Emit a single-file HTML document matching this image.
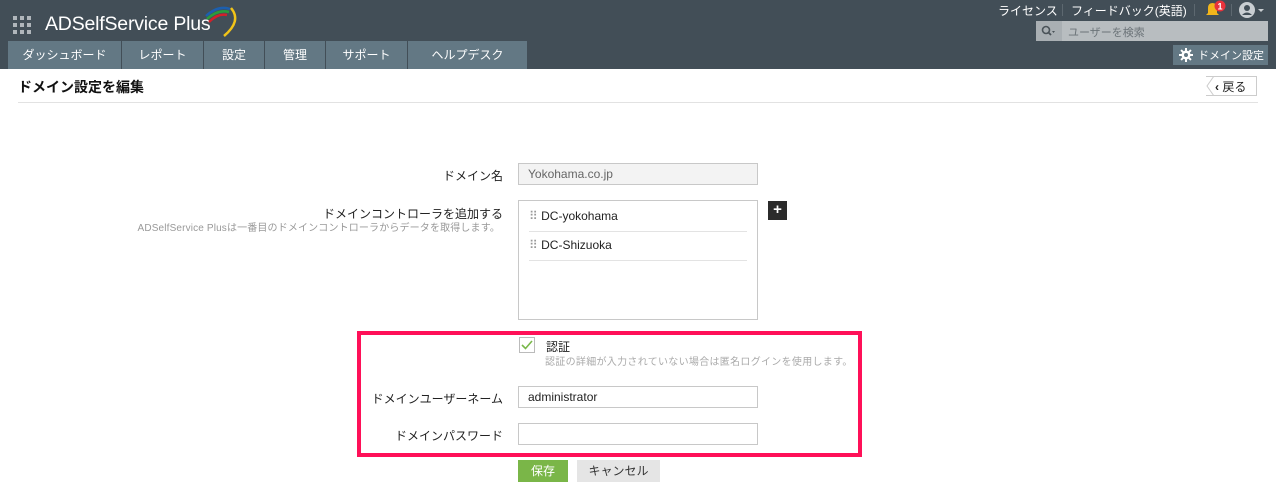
<!DOCTYPE html>
<html><head><meta charset="utf-8"><style>
*{margin:0;padding:0;box-sizing:border-box}
body{width:1276px;height:501px;background:#fff;font-family:"Liberation Sans","Noto Sans CJK JP",sans-serif;font-size:12px;color:#222;position:relative;overflow:hidden}
.abs{position:absolute}
#hdr{left:0;top:0;width:1276px;height:69px;background:#424e57}
.tab{position:absolute;top:41px;height:28px;background:#637884;color:#fff;font-size:12px;text-align:center;line-height:28px}
.lbl{position:absolute;text-align:right;font-size:12px;color:#222}
.inp{position:absolute;border:1px solid #c8c8c8;height:22px;font-size:12px;line-height:20px;padding-left:9px;background:#fff}
</style></head><body>
<div id="hdr" class="abs">
 <svg class="abs" style="left:13px;top:16px" width="18" height="18"><g fill="#b0b6bb">
 <rect x="0" y="0" width="4" height="4"/><rect x="7" y="0" width="4" height="4"/><rect x="14" y="0" width="4" height="4"/>
 <rect x="0" y="7" width="4" height="4"/><rect x="7" y="7" width="4" height="4"/><rect x="14" y="7" width="4" height="4"/>
 <rect x="0" y="14" width="4" height="4"/><rect x="7" y="14" width="4" height="4"/><rect x="14" y="14" width="4" height="4"/></g></svg>
 <div class="abs" style="left:45px;top:13px;color:#fff;font-size:19.5px;letter-spacing:-0.2px">ADSelfService Plus</div>
 <svg class="abs" style="left:200px;top:3px" width="42" height="36">
  <path d="M6 13 Q18 2 30 6" stroke="#1c5fae" stroke-width="2.5" fill="none"/>
  <path d="M7 16 Q18 6 29 9" stroke="#2a9b3d" stroke-width="2.5" fill="none"/>
  <path d="M9 19 Q18 10 27 12" stroke="#d3202a" stroke-width="2.5" fill="none"/>
  <path d="M31 5 Q42 18 24 33" stroke="#f2c418" stroke-width="2.5" fill="none"/>
 </svg>
 <div class="tab" style="left:8px;width:113px">ダッシュボード</div>
 <div class="tab" style="left:122px;width:81px">レポート</div>
 <div class="tab" style="left:204px;width:60px">設定</div>
 <div class="tab" style="left:265px;width:60px">管理</div>
 <div class="tab" style="left:326px;width:81px">サポート</div>
 <div class="tab" style="left:408px;width:119px">ヘルプデスク</div>
 <div class="abs" style="left:998px;top:2px;color:#fff;font-size:12px">ライセンス</div>
 <div class="abs" style="left:1062px;top:4px;width:1px;height:12px;background:#5d6870"></div>
 <div class="abs" style="left:1071px;top:2px;color:#fff;font-size:12px">フィードバック(英語)</div>
 <div class="abs" style="left:1194px;top:4px;width:1px;height:12px;background:#5d6870"></div>
 <svg class="abs" style="left:1203px;top:0px" width="26" height="18"><path d="M3 15 L5 13 L5 8 Q5 3 9.5 3 Q14 3 14 8 L14 13 L16 15 Z" fill="#f2b51b"/><circle cx="17" cy="6" r="5.5" fill="#e8323c"/><text x="17" y="9.5" font-size="9" font-weight="bold" fill="#fff" text-anchor="middle" font-family="Liberation Sans">1</text></svg>
 <div class="abs" style="left:1231px;top:4px;width:1px;height:12px;background:#5d6870"></div>
 <svg class="abs" style="left:1238px;top:1px" width="32" height="18"><circle cx="9" cy="9" r="8" fill="#c9ced2"/><circle cx="9" cy="7" r="3" fill="#424e57"/><path d="M4 14 Q9 9 14 14" fill="#424e57"/><path d="M20 8 L26 8 L23 11 Z" fill="#c9ced2"/></svg>
 <div class="abs" style="left:1036px;top:21px;width:232px;height:20px;background:#b8bdc0"></div>
 <div class="abs" style="left:1036px;top:21px;width:26px;height:20px;background:#a9afb3"></div>
 <svg class="abs" style="left:1041px;top:25px" width="16" height="12"><circle cx="5" cy="5" r="3.5" stroke="#4a5359" stroke-width="1.6" fill="none"/><path d="M7.5 7.5 L10 10" stroke="#4a5359" stroke-width="1.8"/><path d="M11 6 L14 6 L12.5 8Z" fill="#4a5359"/></svg>
 <div class="abs" style="left:1068px;top:24px;color:#6b7378;font-size:11px">ユーザーを検索</div>
 <div class="abs" style="left:1173px;top:45px;width:95px;height:20px;background:#637884"></div>
 <svg class="abs" style="left:1179px;top:48px" width="14" height="14" viewBox="0 0 14 14"><g fill="#fff"><circle cx="7" cy="7" r="4.5"/><rect x="6" y="0" width="2" height="14"/><rect x="0" y="6" width="14" height="2"/><rect x="6" y="0" width="2" height="14" transform="rotate(45 7 7)"/><rect x="6" y="0" width="2" height="14" transform="rotate(-45 7 7)"/></g><circle cx="7" cy="7" r="2" fill="#637884"/></svg>
 <div class="abs" style="left:1198px;top:47px;color:#fff;font-size:11px">ドメイン設定</div>
</div>
<div class="abs" style="left:18px;top:77px;font-size:14px;font-weight:bold;color:#111">ドメイン設定を編集</div>
<div class="abs" style="left:18px;top:102px;width:1240px;height:1px;background:#e2e2e2"></div>
<div class="abs" style="left:1206px;top:76px;width:51px;height:20px;border:1px solid #ccc;border-left:none;background:#fff"></div>
<svg class="abs" style="left:1206px;top:76px" width="10" height="20"><path d="M8 0 L1 10 L8 20" stroke="#ccc" fill="#fff"/></svg>
<div class="abs" style="left:1215px;top:78px;font-size:12px;color:#222"><b>‹</b> 戻る</div>

<div class="lbl" style="left:300px;width:203px;top:167px">ドメイン名</div>
<div class="inp" style="left:518px;top:163px;width:240px;background:#f3f3f3;color:#666">Yokohama.co.jp</div>
<div class="lbl" style="left:200px;width:303px;top:205px">ドメインコントローラを追加する</div>
<div class="lbl" style="left:90px;width:410px;top:219px;font-size:10px;color:#999;letter-spacing:0.15px">ADSelfService Plusは一番目のドメインコントローラからデータを取得します。</div>
<div class="abs" style="left:518px;top:200px;width:240px;height:120px;border:1px solid #c8c8c8"></div>
<div class="abs" style="left:529px;top:209px;font-size:12px;color:#222"><span style="color:#999">⠿</span> DC-yokohama</div>
<div class="abs" style="left:529px;top:231px;width:218px;height:1px;background:#e3e3e3"></div>
<div class="abs" style="left:529px;top:238px;font-size:12px;color:#222"><span style="color:#999">⠿</span> DC-Shizuoka</div>
<div class="abs" style="left:529px;top:260px;width:218px;height:1px;background:#e3e3e3"></div>
<div class="abs" style="left:768px;top:201px;width:19px;height:19px;background:#2b2b2b;color:#fff;font-weight:bold;font-size:15px;text-align:center;line-height:18px">+</div>

<div class="abs" style="left:357px;top:331px;width:505px;height:126px;border:4px solid #ff1058"></div>
<div class="abs" style="left:519px;top:337px;width:16px;height:16px;border:1px solid #bbb;background:#fff"></div>
<svg class="abs" style="left:519px;top:337px" width="16" height="16"><path d="M3 8 L6.5 11.5 L13 4" stroke="#79b84a" stroke-width="1.6" fill="none"/></svg>
<div class="abs" style="left:546px;top:338px;font-size:12px;color:#222">認証</div>
<div class="abs" style="left:545px;top:353px;font-size:10px;color:#aaa;letter-spacing:0.3px">認証の詳細が入力されていない場合は匿名ログインを使用します。</div>
<div class="lbl" style="left:300px;width:203px;top:390px">ドメインユーザーネーム</div>
<div class="inp" style="left:518px;top:386px;width:240px">administrator</div>
<div class="lbl" style="left:300px;width:203px;top:427px">ドメインパスワード</div>
<div class="inp" style="left:518px;top:423px;width:240px"></div>
<div class="abs" style="left:518px;top:460px;width:50px;height:22px;background:#7ab648;color:#fff;font-size:12px;text-align:center;line-height:22px">保存</div>
<div class="abs" style="left:577px;top:460px;width:83px;height:22px;background:#e5e5e5;color:#333;font-size:12px;text-align:center;line-height:22px">キャンセル</div>
</body></html>
